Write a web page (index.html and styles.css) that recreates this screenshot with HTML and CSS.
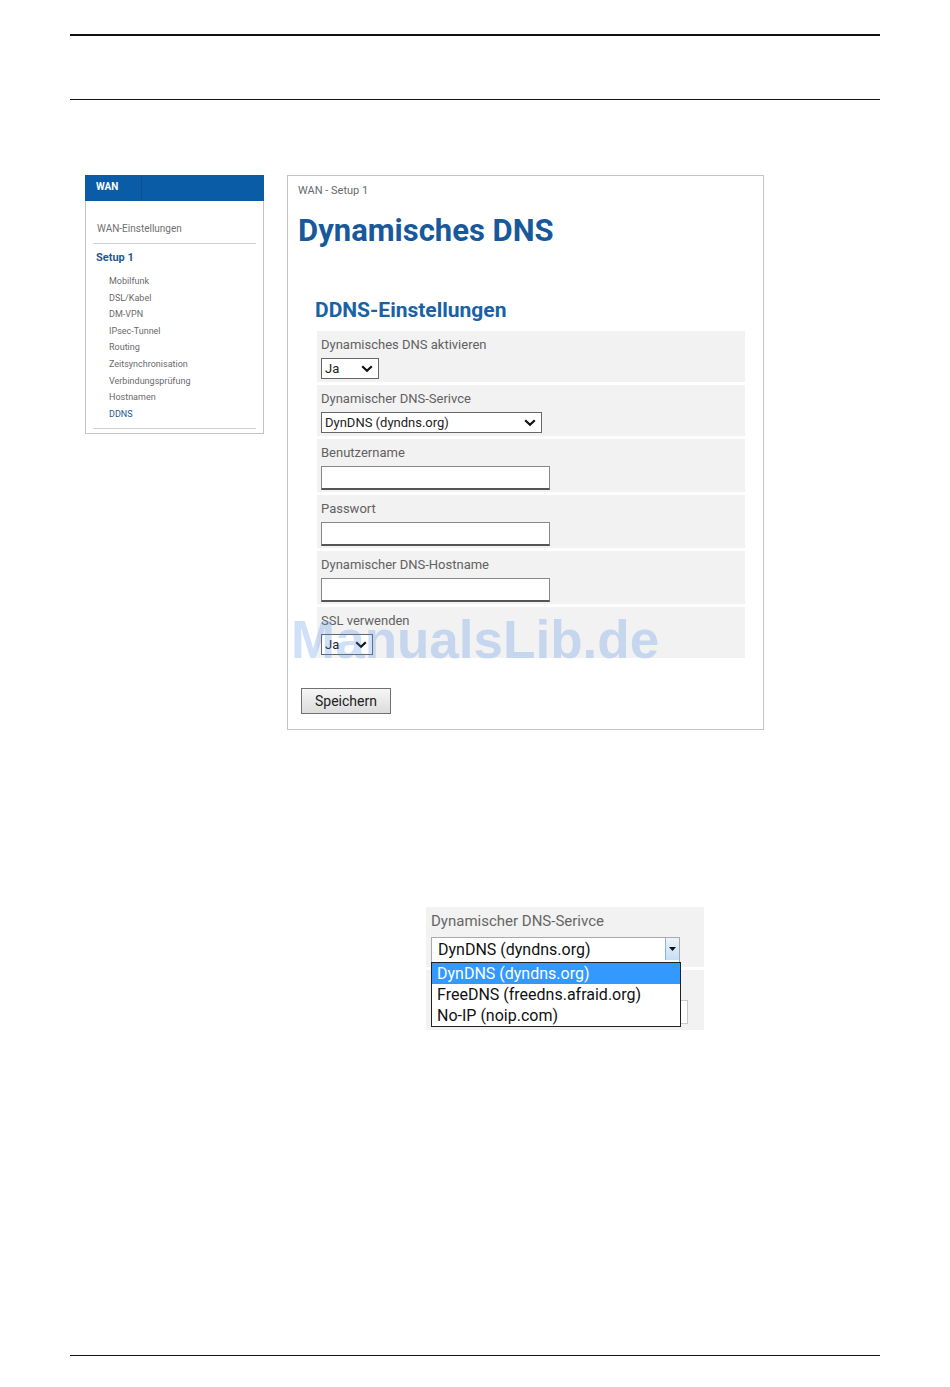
FILE: index.html
```html
<!DOCTYPE html>
<html lang="de">
<head>
  <meta charset="UTF-8">
  <title>Dynamisches DNS</title>
  <link rel="stylesheet" href="styles.css">
</head>
<body>
<div class="page">

  <div class="head-rule"></div>

  <div class="screen">
    <div class="sidebar">
      <div class="side-head"><span>WAN</span></div>
      <div class="side-menu">
        <div class="side-top">WAN-Einstellungen</div>
        <div class="side-group">Setup 1</div>
        <ul class="side-list">
          <li>Mobilfunk</li>
          <li>DSL/Kabel</li>
          <li>DM-VPN</li>
          <li>IPsec-Tunnel</li>
          <li>Routing</li>
          <li>Zeitsynchronisation</li>
          <li>Verbindungsprüfung</li>
          <li>Hostnamen</li>
          <li class="active">DDNS</li>
        </ul>
      </div>
    </div>

    <div class="panel">
      <div class="crumb">WAN - Setup 1</div>
      <h1>Dynamisches DNS</h1>
      <h2>DDNS-Einstellungen</h2>

      <div class="form">
        <div class="row">
          <div class="label">Dynamisches DNS aktivieren</div>
          <div class="select small"><span>Ja</span>
            <svg width="12" height="8" viewBox="0 0 12 8"><path d="M1.2 1.2 L6 5.8 L10.8 1.2" fill="none" stroke="#111" stroke-width="2.2"/></svg>
          </div>
        </div>
        <div class="row">
          <div class="label">Dynamischer DNS-Serivce</div>
          <div class="select wide"><span>DynDNS (dyndns.org)</span>
            <svg width="12" height="8" viewBox="0 0 12 8"><path d="M1.2 1.2 L6 5.8 L10.8 1.2" fill="none" stroke="#111" stroke-width="2.2"/></svg>
          </div>
        </div>
        <div class="row tall">
          <div class="label">Benutzername</div>
          <div class="input"></div>
        </div>
        <div class="row tall">
          <div class="label">Passwort</div>
          <div class="input"></div>
        </div>
        <div class="row tall">
          <div class="label">Dynamischer DNS-Hostname</div>
          <div class="input"></div>
        </div>
        <div class="row">
          <div class="label">SSL verwenden</div>
          <div class="select tiny"><span>Ja</span>
            <svg width="12" height="8" viewBox="0 0 12 8"><path d="M1.2 1.2 L6 5.8 L10.8 1.2" fill="none" stroke="#111" stroke-width="2.2"/></svg>
          </div>
        </div>
      </div>

      <button class="save">Speichern</button>

      <div class="watermark">ManualsLib.de</div>
    </div>
  </div>

  <div class="figure">
    <div class="fig-row">
      <div class="fig-label">Dynamischer DNS-Serivce</div>
      <div class="fig-select">
        <span>DynDNS (dyndns.org)</span>
        <div class="fig-arrow">
          <svg width="7" height="4" viewBox="0 0 7 4"><path d="M0 0 H7 L3.5 4 Z" fill="#111"/></svg>
        </div>
      </div>
    </div>
    <div class="fig-row lower">
      <div class="fig-input"></div>
    </div>
    <ul class="fig-list">
      <li class="hl">DynDNS (dyndns.org)</li>
      <li>FreeDNS (freedns.afraid.org)</li>
      <li>No-IP (noip.com)</li>
    </ul>
  </div>

  <div class="foot-rule"></div>

</div>
</body>
</html>
```

FILE: styles.css
```css
body {
  margin: 0;
  background: #fff;
  font-family: Roboto, "Open Sans", sans-serif;
}
.page {
  width: 810px;
  margin: 0 0 0 70px;
  padding-top: 34px;
}
.head-rule {
  height: 63px;
  border-top: 2px solid #111;
  border-bottom: 1px solid #111;
}

/* screenshot of the router page */
.screen {
  display: flex;
  margin-top: 75px;
  margin-left: 15px;
  gap: 23px;
  align-items: flex-start;
}
.sidebar {
  width: 177px;
  border: 1px solid #c4c4c4;
  border-top: none;
}
.side-head {
  height: 26px;
  margin: 0 -1px;
  background: #0b5ca6;
  color: #fff;
  font-size: 10px;
  font-weight: bold;
  display: flex;
}
.side-head span {
  width: 45px;
  padding-left: 11px;
  line-height: 24px;
  border-right: 1px solid rgba(0,0,0,0.12);
}
.side-menu {
  padding: 0 7px 4px;
}
.side-top {
  margin-top: 21px;
  padding: 0 4px 7px;
  line-height: 14px;
  font-size: 10px;
  color: #707070;
  border-bottom: 1px solid #cfcfcf;
}
.side-group {
  margin-top: 7px;
  padding-left: 3px;
  line-height: 14px;
  font-size: 11px;
  font-weight: bold;
  color: #1d5a92;
}
.side-list {
  list-style: none;
  margin: 8px 0 0;
  padding: 0 0 6px 16px;
  border-bottom: 1px solid #cfcfcf;
}
.side-list li {
  font-size: 9px;
  line-height: 16.6px;
  color: #6a6a6a;
}
.side-list li.active {
  color: #1d5a92;
}

.panel {
  position: relative;
  width: 465px;
  padding: 8px 0 15px 10px;
  border: 1px solid #c4c4c4;
}
.crumb {
  font-size: 11px;
  line-height: 14px;
  color: #6a6a6a;
}
h1 {
  margin: 14px 0 0;
  font-size: 31px;
  line-height: 37px;
  font-weight: bold;
  color: #17599a;
}
h2 {
  margin: 48px 0 0 17px;
  font-size: 21px;
  line-height: 26px;
  font-weight: bold;
  color: #1a62a6;
}
.form {
  margin: 8px 0 0 19px;
  width: 428px;
  display: flex;
  flex-direction: column;
  gap: 3px;
}
.row {
  background: #f2f2f2;
  padding: 6px 4px 3px;
}
.row.tall {
  padding-bottom: 2px;
}
.label {
  font-size: 13px;
  line-height: 16px;
  color: #616161;
  margin-bottom: 5px;
}
.select {
  height: 19px;
  border: 1px solid #666;
  background: #fff;
  display: flex;
  align-items: center;
  justify-content: space-between;
  padding: 0 5px 0 3px;
  font-size: 13px;
  color: #222;
}
.select.small { width: 48px; }
.select.tiny { width: 42px; }
.select.wide { width: 211px; }
.input {
  width: 227px;
  height: 21px;
  background: #fff;
  border: 1px solid #888;
  border-bottom: 2px solid #555;
}
.save {
  margin: 30px 0 0 3px;
  width: 90px;
  height: 26px;
  padding: 0;
  font-family: Roboto, "Open Sans", sans-serif;
  font-size: 14px;
  color: #222;
  background: linear-gradient(#f6f6f6, #dcdcdc);
  border: 1px solid #707070;
  display: block;
}
.watermark {
  position: absolute;
  left: 3px;
  top: 437px;
  font-family: "Liberation Sans", Arial, sans-serif;
  font-size: 53px;
  line-height: 53px;
  font-weight: bold;
  color: rgba(80, 140, 230, 0.27);
  pointer-events: none;
}

/* opened dropdown */
.figure {
  position: relative;
  width: 278px;
  margin: 177px 0 0 356px;
}
.fig-row {
  background: #f2f2f2;
  height: 55px;
  padding: 5px 0 0 5px;
}
.fig-row.lower {
  margin-top: 3px;
  height: 60px;
  padding: 0 0 0 5px;
}
.fig-label {
  font-size: 15px;
  line-height: 18px;
  color: #666;
  margin-bottom: 7px;
}
.fig-select {
  width: 247px;
  height: 24px;
  border: 1px solid #aaa;
  background: #fff;
  display: flex;
  justify-content: space-between;
  font-size: 16px;
  line-height: 24px;
  color: #111;
}
.fig-select span {
  padding-left: 6px;
}
.fig-arrow {
  width: 13px;
  height: 22px;
  margin: 0 0 0 auto;
  border-left: 1px solid #8fb3d6;
  background: linear-gradient(#eaf4fc, #c6def4);
  display: flex;
  align-items: center;
  justify-content: center;
}
.fig-input {
  position: relative;
  top: 30px;
  width: 255px;
  height: 22px;
  border: 1px solid #c8c8c8;
  background: #fff;
}
.fig-list {
  position: absolute;
  left: 5px;
  top: 55px;
  width: 248px;
  margin: 0;
  padding: 0;
  list-style: none;
  background: #fff;
  border: 1px solid #222;
}
.fig-list li {
  height: 21px;
  line-height: 21px;
  padding-left: 5px;
  font-size: 16px;
  color: #111;
}
.fig-list li.hl {
  background: #3399ff;
  color: #fff;
}

.foot-rule {
  margin-top: 325px;
  border-top: 1px solid #111;
}
```
